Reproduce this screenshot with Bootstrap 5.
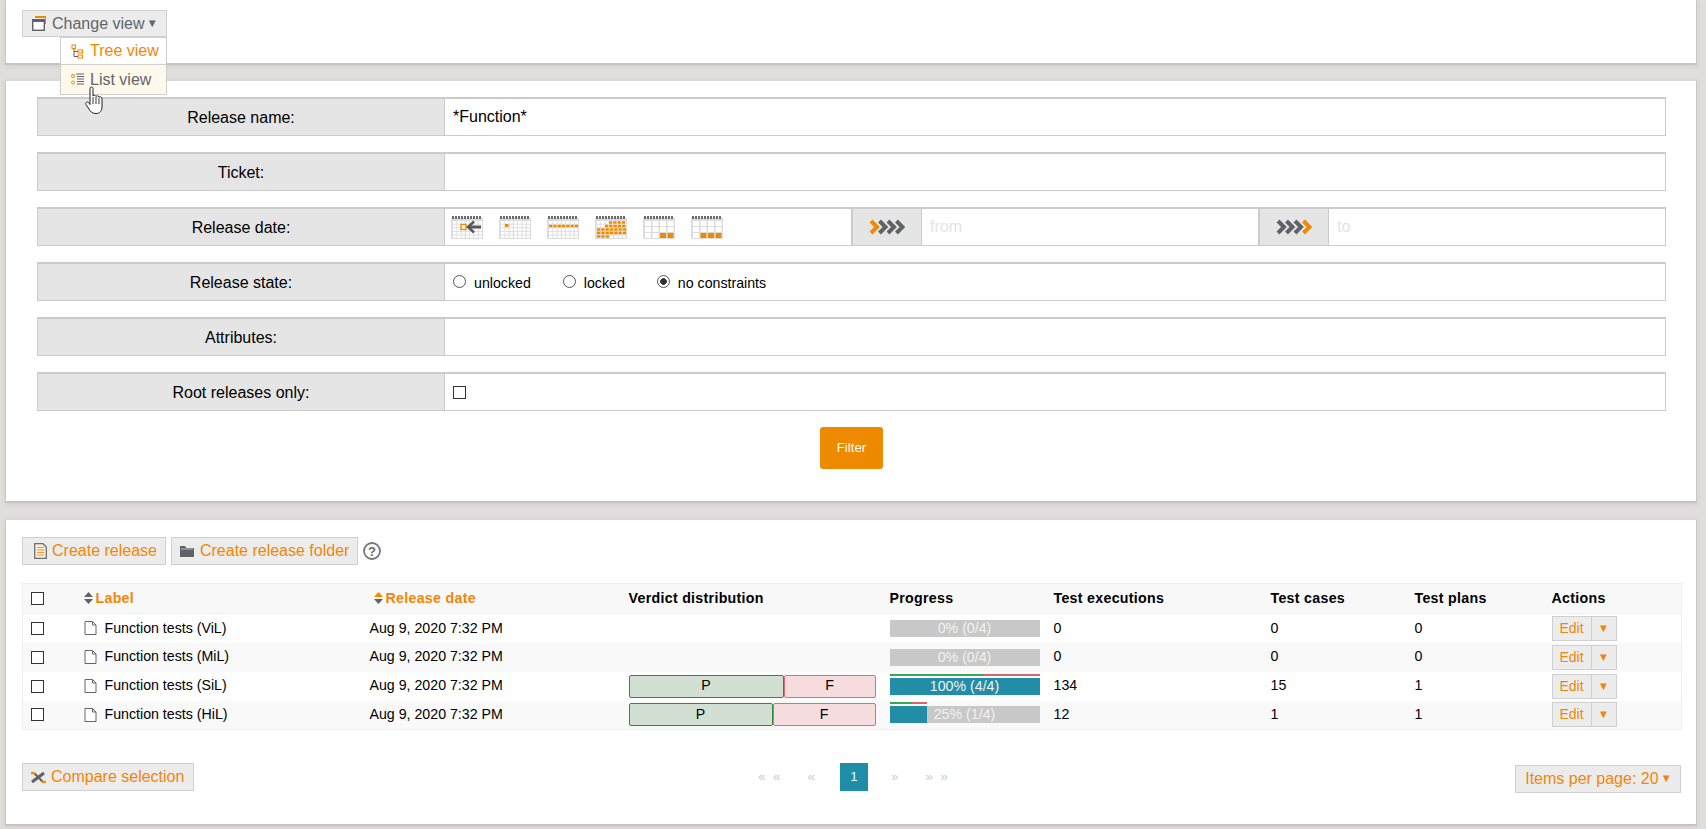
<!DOCTYPE html>
<html lang="en">
<head>
<meta charset="utf-8">
<title>Releases</title>
<link href="https://cdn.jsdelivr.net/npm/bootstrap@5.3.0/dist/css/bootstrap.min.css" rel="stylesheet">
<style>
html,body{height:100%}
body{margin:0;background:#e0dedc;font-family:"Liberation Sans",Arial,sans-serif;font-size:14.2px;color:#000;overflow:hidden}
.pane{background:#fff;margin:0 9px 15px 5px;border:1px solid #c9c9c9;border-top-color:#d8d8d8;border-bottom:2px solid #c4c4c4;position:relative;box-shadow:0 1px 5px rgba(0,0,0,.08)}
.pane-top{height:65px;border-top:0;padding:10px 16px}
.pane-form{height:423px;padding:16px 30px 0 31px}
.pane-list{height:307px;padding:17px 15px 0 16px;margin-top:16px}
.gbtn{display:inline-flex;align-items:center;white-space:nowrap;background:#ececec;border:1px solid #d0d0d0;border-radius:0;color:#f0870a;font-size:16px;line-height:1;padding:0 8px;height:28px;text-decoration:none;gap:5px}
.gbtn svg{flex:none}
.gbtn:hover{color:#f0870a;background:#ececec;border-color:#d0d0d0}
.view-btn{color:#60666b;height:27px;width:145px;padding-left:9px;font-size:16px}
.view-btn:hover{color:#60666b}
.view-btn .tri{margin-left:-3px}
.tri{font-size:11.5px}
.view-menu{display:block;position:absolute;left:54px;top:37px;width:107px;min-width:0;padding:0;margin:0;border:1px solid #cfcfcf;border-radius:0;background:#fff;z-index:5;font-size:16px}
.view-menu .dropdown-item{display:flex;align-items:center;gap:6px;padding:0 0 0 10px;color:#f0870a;height:27px;border-bottom:1px solid #cfcfcf}
.view-menu .dropdown-item.cur{background:#fff9ec;color:#60666b;height:29px;border-bottom:0}
.cursor{position:absolute;left:85px;top:85px;z-index:6}
.frow{display:flex;height:39px;margin-bottom:16px;border:1px solid #cbcbcb;border-top-width:2px}
.flabel{width:407px;flex:none;background:#e5e5e5;border-right:1px solid #cbcbcb;display:flex;align-items:center;justify-content:center;font-size:16px;padding-top:1px}
.ffield{flex:1;min-width:0;display:flex;align-items:center;background:#fff}
.ffield input[type=text]{border:0;outline:0;width:100%;height:100%;padding:0 8px 0 8px;font-family:inherit;font-size:16px;background:transparent;min-width:0}
.ffield input::placeholder{color:#e3e3e3;opacity:1}
.cals{width:406px;flex:none;display:flex;gap:16px;padding-left:6px}
.range-tag{width:71px;flex:none;height:100%;background:#e5e5e5;border-left:2px solid #cbcbcb;border-right:1px solid #cbcbcb;display:flex;align-items:center;justify-content:center}
.range-in{flex:1;height:100%;min-width:0}
.radios{display:flex;align-items:center;padding:3px 0 0 8px;font-size:14.2px}
.radios label{display:flex;align-items:center;gap:8px;margin-right:32px}
.fake-radio{appearance:none;width:13px;height:13px;margin:-3px 0 0;border:1px solid #555;border-radius:50%;background:#fff}
.fake-radio:checked{background:radial-gradient(circle,#333 0 3px,#fff 3.6px)}
.fake-check{appearance:none;display:block;width:13px;height:13px;margin:0;border:1px solid #333;background:#fff}
.filter-wrap{display:flex;justify-content:center}
.filter-btn{width:63px;height:42px;padding:0;background:#ee8a00;border:0;border-radius:3px;color:#fff;font-size:13.33px}
.filter-btn:hover{background:#ee8a00;color:#fff}
.toolbar{display:flex;align-items:center;gap:5px;margin-bottom:18px}
.release-table{table-layout:fixed;width:1659px;margin:0;border:1px solid #efefef;border-collapse:collapse;font-size:14.2px}
.release-table th,.release-table td{padding:0;border:0;vertical-align:middle;color:#000;background:transparent;box-shadow:none;height:29px}
.release-table thead th{background:#f8f8f8;height:30px;font-weight:700;letter-spacing:.3px;border-bottom:1px solid #efefef}
.release-table tbody tr:nth-child(even) td{background:#f9f9f9}
.release-table .cc{padding-left:8px}
.release-table th a{color:#f0870a;text-decoration:none}
.sort{display:inline-block;vertical-align:-1px;margin-right:3px}
.namecell{display:flex;align-items:center;gap:8px}
.verdict{display:flex;height:23px;width:247px}
.vp,.vf{display:flex;align-items:center;justify-content:center;border-radius:2px}
.vp{background:#d1e0d3;border:1px solid #2f8a3a}
.vf{background:#f7dde0;border:1px solid #df6c74}
.prog-wrap{width:150px;position:relative}
.prog{height:17px;background:#c8c8c8;color:#f2f2f2;position:relative;text-align:center;line-height:17px}
.prog i{position:absolute;left:0;top:0;bottom:0;background:#218da6}
.prog span{position:relative}
.stripe{position:absolute;left:0;top:-4px;height:2px;display:flex}
.stripe b{display:block;height:2px}
.sg{background:#37a85a}.sr{background:#d9646d}
.editgrp{display:inline-flex;height:25px;border:1px solid #d0d0d0;background:#ececec;color:#f0870a;font-size:14px;line-height:23px}
.editgrp span{display:block;text-align:center}
.editgrp .e1{width:39px;border-right:1px solid #d0d0d0}
.editgrp .e2{width:24px;font-size:11.5px}
.footer-row{display:flex;justify-content:space-between;align-items:flex-start;margin-top:33px;position:relative}
.pager{position:absolute;left:736px;top:0;display:flex;align-items:center;height:28px;color:#c6ccd0;font-size:13.33px;word-spacing:4px}
.pager .pnum{display:block;width:28px;height:28px;line-height:28px;text-align:center;background:#1f8da8;color:#dff;margin:0 0 0 25px}
.pager .gap-a{margin-left:27px}
.pager .gap-b{margin-left:23px}
.pager .gap-c{margin-left:27px}
.items-btn{margin-top:2px;height:28px;padding:0 8px 0 9px;gap:2px}
.first-btn{padding-left:11px;gap:1px}
.folder-btn{gap:2px}
.cmp-btn{width:172px}
</style>
</head>
<body>
<svg width="0" height="0" class="d-block" aria-hidden="true">
<defs>
<pattern id="fine" x="2" y="5" width="4.3" height="3.6" patternUnits="userSpaceOnUse"><rect width="3.3" height="2.7" fill="#fff"/></pattern>
<symbol id="calfine" viewBox="0 0 32 23"><rect y="2" width="32" height="21" fill="#dcdcdc"/><rect x="1" y="5" width="30" height="17" fill="url(#fine)"/><path d="M1 1.500H31" stroke="#6a6a6a" stroke-width="3" stroke-dasharray="2 1"/></symbol>
<symbol id="calbig" viewBox="0 0 32 23"><rect y="2" width="32" height="21" fill="#dcdcdc"/><g fill="#fff"><rect x="2" y="5" width="6" height="5"/><rect x="9.500" y="5" width="6" height="5"/><rect x="17" y="5" width="6" height="5"/><rect x="24.500" y="5" width="6" height="5"/><rect x="2" y="11" width="6" height="5"/><rect x="9.500" y="11" width="6" height="5"/><rect x="17" y="11" width="6" height="5"/><rect x="24.500" y="11" width="6" height="5"/><rect x="2" y="17" width="6" height="5"/><rect x="9.500" y="17" width="6" height="5"/><rect x="17" y="17" width="6" height="5"/><rect x="24.500" y="17" width="6" height="5"/></g><path d="M1 1.500H31" stroke="#6a6a6a" stroke-width="3" stroke-dasharray="2 1"/></symbol>
</defs>
</svg>

<div class="pane pane-top">
  <a href="#" class="gbtn view-btn">
    <svg width="15" height="15" viewBox="0 0 15 15"><rect x="3" y="0" width="11" height="2" fill="#ee8a00"/><path d="M13 0H14V8H13Z" fill="#ee8a00"/><rect x=".7" y="3.700" width="11.600" height="10.600" fill="#fff" stroke="#5f6368" stroke-width="1.400"/><rect y="3" width="13" height="3" fill="#5f6368"/></svg>
    Change view <span class="tri">▼</span>
  </a>
  <div class="dropdown-menu view-menu">
    <a class="dropdown-item" href="#"><svg width="13" height="15" viewBox="0 0 13 15" fill="none"><rect x="1" y="1" width="3.500" height="3.500" stroke="#ee8a00"/><rect x="7" y="6" width="4.500" height="3" stroke="#ee8a00"/><rect x="7" y="11" width="4.500" height="3" stroke="#ee8a00"/><path d="M3 5V12.500H7M3 7.500H7" stroke="#5f6368"/></svg>Tree view</a>
    <a class="dropdown-item cur" href="#"><svg width="13" height="13" viewBox="0 0 13 13" fill="none"><circle cx="2" cy="3" r="1.500" stroke="#ee8a00"/><circle cx="2" cy="9.500" r="1.500" stroke="#ee8a00"/><path d="M5 1H13M6 3.500H13M6 6H13M6 8.500H13M6 11H13" stroke="#5f6368"/></svg>List view</a>
  </div>
</div>
<svg class="cursor" width="20" height="30" viewBox="0 0 20 30"><path d="M5 3.500C5 1.500 8 1.500 8 3.500V11C8.500 10 10.500 10 11 11.500C11.500 10.500 13.500 10.500 14 12C14.500 11.500 17 11.500 17 14V21C17 26 15 28.500 11 28.500C7 28.500 5.500 26.500 4 24L1 19.500C0 17.500 2.500 16 4 18L5 19.500Z" fill="#fff" stroke="#222" stroke-width="1"/><path d="M8 12V19M11 12V19M14 12.500V19" stroke="#222" stroke-width=".9"/></svg>

<div class="pane pane-form">
  <div class="frow"><div class="flabel">Release name:</div><div class="ffield"><input type="text" value="*Function*"></div></div>
  <div class="frow"><div class="flabel">Ticket:</div><div class="ffield"><input type="text"></div></div>
  <div class="frow">
    <div class="flabel">Release date:</div>
    <div class="ffield">
      <div class="cals">
        <svg width="32" height="23"><use href="#calfine"/><rect x="10" y="8.500" width="5" height="5" fill="#fff" stroke="#ee8a00" stroke-width="1.400"/><path d="M30 11H19" stroke="#55595c" stroke-width="3"/><path d="M23 5.500L17 11L23 16.500" fill="none" stroke="#55595c" stroke-width="2.500"/></svg>
        <svg width="32" height="23"><use href="#calfine"/><rect x="6" y="8" width="3.500" height="3" fill="#ee8a00"/></svg>
        <svg width="32" height="23"><use href="#calfine"/><path d="M2 10H31" stroke="#ee8a00" stroke-width="2.400" stroke-dasharray="3.300 1"/></svg>
        <svg width="32" height="23"><use href="#calfine"/><path d="M14 6.500H31M10 10H31M2 13.500H31M2 17H31M2 20.500H14" stroke="#ee8a00" stroke-width="2.700" stroke-dasharray="3.300 1"/></svg>
        <svg width="32" height="23"><use href="#calbig"/><rect x="17" y="17" width="6" height="5" fill="#ee8a00"/><rect x="24.500" y="17" width="6" height="5" fill="#ee8a00"/></svg>
        <svg width="32" height="23"><use href="#calbig"/><rect x="9.500" y="17" width="6" height="5" fill="#ee8a00"/><rect x="17" y="17" width="6" height="5" fill="#ee8a00"/><rect x="24.500" y="17" width="6" height="5" fill="#ee8a00"/></svg>
      </div>
      <div class="range-tag"><svg width="36" height="16" viewBox="0 0 36 16" fill="none" stroke-width="4"><path d="M2 2L8 8L2 14" stroke="#ee8a00"/><path d="M10.500 2L16.500 8L10.500 14M19 2L25 8L19 14M27.500 2L33.500 8L27.500 14" stroke="#5f6368"/></svg></div>
      <div class="range-in"><input type="text" placeholder="from"></div>
      <div class="range-tag"><svg width="36" height="16" viewBox="0 0 36 16" fill="none" stroke-width="4"><path d="M2 2L8 8L2 14M10.500 2L16.500 8L10.500 14M19 2L25 8L19 14" stroke="#5f6368"/><path d="M27.500 2L33.500 8L27.500 14" stroke="#ee8a00"/></svg></div>
      <div class="range-in"><input type="text" placeholder="to"></div>
    </div>
  </div>
  <div class="frow">
    <div class="flabel">Release state:</div>
    <div class="ffield radios">
      <label><input class="fake-radio" type="radio" name="st">unlocked</label>
      <label><input class="fake-radio" type="radio" name="st">locked</label>
      <label><input class="fake-radio" type="radio" name="st" checked>no constraints</label>
    </div>
  </div>
  <div class="frow"><div class="flabel">Attributes:</div><div class="ffield"></div></div>
  <div class="frow"><div class="flabel">Root releases only:</div><div class="ffield ps-2"><input class="fake-check" type="checkbox"></div></div>
  <div class="filter-wrap"><button class="btn filter-btn" type="button">Filter</button></div>
</div>

<div class="pane pane-list">
  <div class="toolbar">
    <a href="#" class="gbtn first-btn"><svg width="13" height="16" viewBox="0 0 13 16"><path d="M.7 .7H9L12.300 4V15.300H.7Z" fill="#fbeeda" stroke="#6b6e72" stroke-width="1.300"/><path d="M3 4.500H10M3 7H10M3 9.500H10M3 12H10" stroke="#ee9a30"/></svg><span class="ms-1">Create release</span></a>
    <a href="#" class="gbtn folder-btn"><svg width="14" height="12" viewBox="0 0 14 12"><path d="M0 1H5L6.500 3H14V12H0Z" fill="#5f6368"/><path d="M1 4H13" stroke="#e8e8e8" stroke-width=".7"/></svg><span class="ms-1">Create release folder</span></a>
    <svg width="18" height="18" viewBox="0 0 18 18"><circle cx="9" cy="9" r="8" fill="#fff" stroke="#777" stroke-width="1.800"/><text x="9" y="13.500" font-family="Liberation Sans" font-size="13" font-weight="700" text-anchor="middle" fill="#666">?</text></svg>
  </div>
  <table class="table release-table">
    <colgroup><col style="width:61px"><col style="width:286px"><col style="width:259px"><col style="width:261px"><col style="width:164px"><col style="width:217px"><col style="width:144px"><col style="width:137px"><col style="width:130px"></colgroup>
    <thead><tr>
      <th class="cc"><input class="fake-check" type="checkbox"></th>
      <th><svg class="sort" width="9" height="12" viewBox="0 0 9 12"><path d="M4.500 0L9 5H0ZM0 7H9L4.500 12Z" fill="#5f6368"/></svg><a href="#">Label</a></th>
      <th class="ps-1"><svg class="sort" width="9" height="12" viewBox="0 0 9 12"><path d="M4.500 0L9 5H0Z" fill="#ee8a00"/><path d="M0 7H9L4.500 12Z" fill="#5f6368"/></svg><a href="#">Release date</a></th>
      <th>Verdict distribution</th><th>Progress</th><th>Test executions</th><th>Test cases</th><th>Test plans</th><th>Actions</th>
    </tr></thead>
    <tbody>
      <tr>
        <td class="cc"><input class="fake-check" type="checkbox"></td>
        <td><div class="namecell"><svg width="13" height="14" viewBox="0 0 13 14" fill="none"><path d="M1 .5H8.500L12 4V13.500H1ZM8.500 .5V4H12" stroke="#666" fill="#fff"/></svg>Function tests (ViL)</div></td>
        <td>Aug 9, 2020 7:32 PM</td><td></td>
        <td><div class="prog-wrap"><div class="prog"><span>0% (0/4)</span></div></div></td>
        <td>0</td><td>0</td><td>0</td>
        <td><div class="editgrp"><span class="e1">Edit</span><span class="e2">▼</span></div></td>
      </tr>
      <tr>
        <td class="cc"><input class="fake-check" type="checkbox"></td>
        <td><div class="namecell"><svg width="13" height="14" viewBox="0 0 13 14" fill="none"><path d="M1 .5H8.500L12 4V13.500H1ZM8.500 .5V4H12" stroke="#666" fill="#fff"/></svg>Function tests (MiL)</div></td>
        <td>Aug 9, 2020 7:32 PM</td><td></td>
        <td><div class="prog-wrap"><div class="prog"><span>0% (0/4)</span></div></div></td>
        <td>0</td><td>0</td><td>0</td>
        <td><div class="editgrp"><span class="e1">Edit</span><span class="e2">▼</span></div></td>
      </tr>
      <tr>
        <td class="cc"><input class="fake-check" type="checkbox"></td>
        <td><div class="namecell"><svg width="13" height="14" viewBox="0 0 13 14" fill="none"><path d="M1 .5H8.500L12 4V13.500H1ZM8.500 .5V4H12" stroke="#666" fill="#fff"/></svg>Function tests (SiL)</div></td>
        <td>Aug 9, 2020 7:32 PM</td>
        <td><div class="verdict"><div class="vp" style="width:155px">P</div><div class="vf" style="width:92px">F</div></div></td>
        <td><div class="prog-wrap"><div class="stripe"><b class="sg" style="width:94px"></b><b class="sr" style="width:56px"></b></div><div class="prog"><i style="width:100%"></i><span>100% (4/4)</span></div></div></td>
        <td>134</td><td>15</td><td>1</td>
        <td><div class="editgrp"><span class="e1">Edit</span><span class="e2">▼</span></div></td>
      </tr>
      <tr>
        <td class="cc"><input class="fake-check" type="checkbox"></td>
        <td><div class="namecell"><svg width="13" height="14" viewBox="0 0 13 14" fill="none"><path d="M1 .5H8.500L12 4V13.500H1ZM8.500 .5V4H12" stroke="#666" fill="#fff"/></svg>Function tests (HiL)</div></td>
        <td>Aug 9, 2020 7:32 PM</td>
        <td><div class="verdict"><div class="vp" style="width:144px">P</div><div class="vf" style="width:103px">F</div></div></td>
        <td><div class="prog-wrap"><div class="stripe"><b class="sg" style="width:22px"></b><b class="sr" style="width:15px"></b></div><div class="prog"><i style="width:25%"></i><span>25% (1/4)</span></div></div></td>
        <td>12</td><td>1</td><td>1</td>
        <td><div class="editgrp"><span class="e1">Edit</span><span class="e2">▼</span></div></td>
      </tr>
    </tbody>
  </table>
  <div class="footer-row">
    <a href="#" class="gbtn cmp-btn"><svg width="15" height="13" viewBox="0 0 15 13" fill="none"><path d="M0 2.500C3 1 4 2.500 5 4M10 9C11 10.500 12 12 15 10.500" stroke="#ee8a00" stroke-width="2.400"/><path d="M1 11L13 2" stroke="#5f6368" stroke-width="3"/><path d="M4 3L11 10" stroke="#5f6368" stroke-width="2"/></svg>Compare selection</a>
    <div class="pager"><span>« «</span><span class="gap-a">«</span><span class="pnum">1</span><span class="gap-b">»</span><span class="gap-c">» »</span></div>
    <a href="#" class="gbtn items-btn">Items per page: 20 <span class="tri">▼</span></a>
  </div>
</div>
<script src="https://cdn.jsdelivr.net/npm/bootstrap@5.3.0/dist/js/bootstrap.bundle.min.js"></script>
</body>
</html>
